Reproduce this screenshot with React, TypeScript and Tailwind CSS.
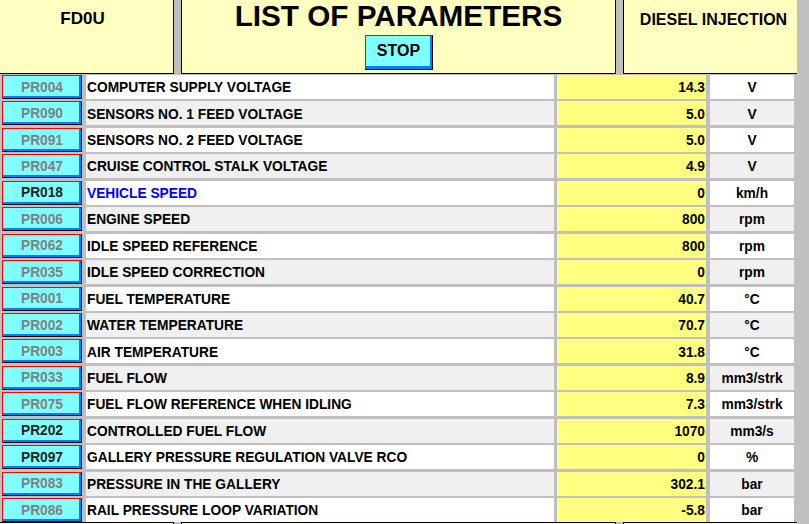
type Param = {
  code: string;
  label: string;
  value: string;
  unit: string;
  active?: boolean;
  highlight?: boolean;
};

const PARAMS: Param[] = [
  { code: 'PR004', label: 'COMPUTER SUPPLY VOLTAGE', value: '14.3', unit: 'V' },
  { code: 'PR090', label: 'SENSORS NO. 1 FEED VOLTAGE', value: '5.0', unit: 'V' },
  { code: 'PR091', label: 'SENSORS NO. 2 FEED VOLTAGE', value: '5.0', unit: 'V' },
  { code: 'PR047', label: 'CRUISE CONTROL STALK VOLTAGE', value: '4.9', unit: 'V' },
  { code: 'PR018', label: 'VEHICLE SPEED', value: '0', unit: 'km/h', active: true, highlight: true },
  { code: 'PR006', label: 'ENGINE SPEED', value: '800', unit: 'rpm' },
  { code: 'PR062', label: 'IDLE SPEED REFERENCE', value: '800', unit: 'rpm' },
  { code: 'PR035', label: 'IDLE SPEED CORRECTION', value: '0', unit: 'rpm' },
  { code: 'PR001', label: 'FUEL TEMPERATURE', value: '40.7', unit: '°C' },
  { code: 'PR002', label: 'WATER TEMPERATURE', value: '70.7', unit: '°C' },
  { code: 'PR003', label: 'AIR TEMPERATURE', value: '31.8', unit: '°C' },
  { code: 'PR033', label: 'FUEL FLOW', value: '8.9', unit: 'mm3/strk' },
  { code: 'PR075', label: 'FUEL FLOW REFERENCE WHEN IDLING', value: '7.3', unit: 'mm3/strk' },
  { code: 'PR202', label: 'CONTROLLED FUEL FLOW', value: '1070', unit: 'mm3/s', active: true },
  { code: 'PR097', label: 'GALLERY PRESSURE REGULATION VALVE RCO', value: '0', unit: '%', active: true },
  { code: 'PR083', label: 'PRESSURE IN THE GALLERY', value: '302.1', unit: 'bar' },
  { code: 'PR086', label: 'RAIL PRESSURE LOOP VARIATION', value: '-5.8', unit: 'bar' },
];

// 3D push button: red top/left edge, black bottom/right, blue inner shadow
const btn =
  'bg-[#80ffff] border-t border-l border-t-[#ff0000] border-l-[#ff0000] border-r border-b border-r-black border-b-black shadow-[inset_-2px_-2px_0_#0080ff]';

export default function App() {
  return (
    <div className="w-[809px] h-[524px] overflow-hidden bg-[#c0c0c0] font-['Liberation_Sans',Arial,sans-serif] font-bold text-black">
      {/* Title bar */}
      <div className="flex gap-[7px] h-[74px]">
        <div className="w-[174px] bg-[#ffffc0] border-r border-b border-black pt-[10px] pr-[8px] text-center text-[17px] leading-none">
          FD0U
        </div>
        <div className="w-[435px] bg-[#ffffc0] border-l border-r border-b border-black flex flex-col items-center">
          <h1 className="mt-[1px] text-[29.7px] leading-none">LIST OF PARAMETERS</h1>
          <button className={`${btn} mt-[4px] w-[68px] h-[35px] text-[16px] leading-none pb-[2px] shadow-[inset_-2px_-3px_0_#0080ff]`}>
            STOP
          </button>
        </div>
        <div className="w-[174px] bg-[#ffffc0] border-l border-b border-black pt-[11.5px] pl-[6px] text-center text-[16px] leading-none">
          DIESEL INJECTION
        </div>
      </div>

      {/* Parameter rows */}
      <div className="mt-[1px] flex flex-col gap-[2.44px]">
        {PARAMS.map((p, i) => {
          const rowBg = i % 2 === 0 ? 'bg-white' : 'bg-[#f0f0f0]';
          return (
            <div key={p.code} className="flex h-[24px] pl-[2px] text-[13.75px] leading-none">
              <div
                className={`${btn} w-[80px] flex items-center justify-center pt-[1px] ${
                  p.active ? 'text-[#222222]' : 'text-[#808080]'
                }`}
              >
                {p.code}
              </div>
              <div
                className={`${rowBg} ml-[4px] w-[468px] flex items-center pl-[1px] pt-[2px] ${
                  p.highlight ? 'text-[#0000ff]' : ''
                }`}
              >
                {p.label}
              </div>
              <div className="ml-[3px] w-[149px] bg-[#ffff80] flex items-center justify-end pr-[1px] pt-[2px]">{p.value}</div>
              <div className={`${rowBg} ml-[4px] w-[84px] flex items-center justify-center pt-[2px]`}>{p.unit}</div>
            </div>
          );
        })}
      </div>

      {/* Bottom panel */}
      <div className="flex gap-[7px] h-[30px]">
        <div className="w-[174px] bg-[#ffffc0] border-t border-r border-black" />
        <div className="w-[435px] bg-[#ffffc0] border-t border-l border-r border-black" />
        <div className="w-[174px] bg-[#ffffc0] border-t border-l border-black" />
      </div>
    </div>
  );
}
